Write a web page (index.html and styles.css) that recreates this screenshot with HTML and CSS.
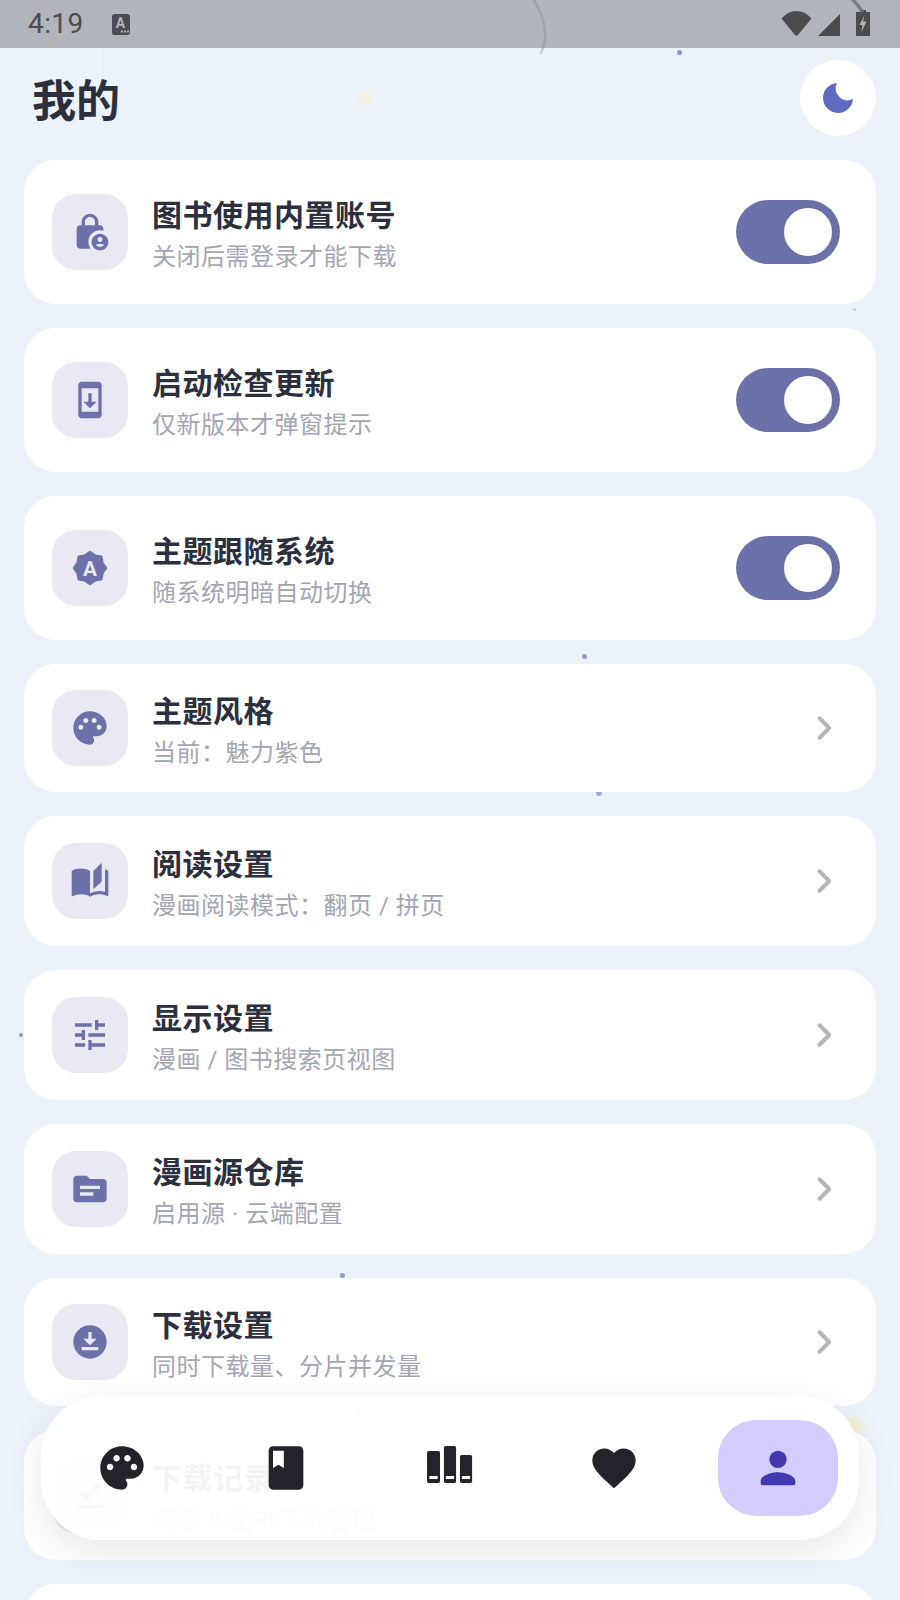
FILE: index.html
```html
<!DOCTYPE html>
<html lang="zh-CN">
<head>
    <meta charset="UTF-8">
    <meta name="viewport" content="width=device-width, initial-scale=1.0">
    <title>我的</title>
    <link rel="stylesheet" href="styles.css">
</head>
<body>

    <!-- Floating particles behind the page -->
    <div class="particles">
        <span class="dot dot-1"></span>
        <span class="dot dot-2"></span>
        <span class="dot dot-3"></span>
        <span class="dot dot-4"></span>
        <span class="dot dot-5"></span>
        <span class="dot dot-6"></span>
        <span class="dot dot-7"></span>
        <span class="glow glow-1"></span>
        <span class="glow glow-2"></span>
    </div>

    <div class="status-bar">
        <div class="status-left">
            <span class="status-time">4:19</span>
            <svg class="status-a" viewBox="0 0 18 21">
                <rect width="18" height="21" rx="2.500" fill="#4a4c50"/>
                <text x="8.500" y="13.500" class="status-a-text">A</text>
                <rect x="9" y="16.500" width="2" height="2" fill="#b1b4bb"/>
                <rect x="12" y="16.500" width="2" height="2" fill="#b1b4bb"/>
                <rect x="15" y="16.500" width="2" height="2" fill="#b1b4bb"/>
            </svg>
        </div>
        <div class="status-right">
            <svg class="status-wifi" viewBox="0 0 31 25">
                <path d="M.5 7.500C4.500 3 9.500 0 15.500 0s11 3 15 7.500L17 24c-.8.9-2.200.9-3 0z" fill="#4a4c50"/>
            </svg>
            <svg class="status-signal" viewBox="0 0 22 22">
                <path d="M22 0v22H0z" fill="#4a4c50"/>
            </svg>
            <svg class="status-battery" viewBox="0 0 14 26">
                <path d="M4 0h6v2h4v24H0V2h4z" fill="#4a4c50"/>
                <path d="M8.500 5 3.500 15h3l-1 7 5-10.500H7z" fill="#b1b4bb"/>
            </svg>
        </div>
    </div>

    <svg class="arcs" viewBox="0 0 900 80">
        <path d="M534 0Q552 30 541 53" class="arc-line"/>
        <path d="M853 0Q858 5 862 11" class="arc-line arc-dark"/>
        <path d="M103 0V75" class="arc-line arc-faint"/>
    </svg>

    <div class="page">
        <div class="header">
            <h1 class="page-title">我的</h1>
            <div class="theme-btn">
                <svg viewBox="0 0 30 30"><path d="M14 0A15 15 0 1 0 30 16A12 12 0 0 1 14 0z" fill="#5e6bc0"/></svg>
            </div>
        </div>

        <div class="list">
            <div class="row row-switch">
                <div class="row-icon">
                    <svg viewBox="0 0 24 24"><path d="M18 8h-1V6c0-2.760-2.240-5-5-5S7 3.240 7 6v2H6c-1.100 0-2 .9-2 2v10c0 1.100.9 2 2 2h6.260A6.990 6.990 0 0 1 11 18c0-3.870 3.130-7 7-7 .7 0 1.370.1 2 .29V10c0-1.100-.9-2-2-2zM15 8H9V6c0-1.660 1.340-3 3-3s3 1.340 3 3v2z"/><path d="M18 13c-2.760 0-5 2.240-5 5s2.240 5 5 5 5-2.240 5-5-2.240-5-5-5zm0 2c.83 0 1.500.67 1.500 1.500S18.830 18 18 18s-1.500-.67-1.500-1.500.67-1.500 1.500-1.500zm0 6c-1.030 0-1.940-.52-2.480-1.320.73-.42 1.570-.68 2.480-.68s1.750.26 2.480.68c-.54.8-1.450 1.320-2.480 1.320z"/></svg>
                </div>
                <div class="row-text">
                    <div class="row-title">图书使用内置账号</div>
                    <div class="row-sub">关闭后需登录才能下载</div>
                </div>
                <div class="switch"><span class="knob"></span></div>
            </div>

            <div class="row row-switch">
                <div class="row-icon">
                    <svg viewBox="0 0 24 24"><path d="M17 1.010 7 1c-1.100 0-2 .9-2 2v18c0 1.100.9 2 2 2h10c1.100 0 2-.9 2-2V3c0-1.100-.9-1.990-2-1.990zM17 19H7V5h10v14zm-1-6h-3V8h-2v5H8l4 4 4-4z"/></svg>
                </div>
                <div class="row-text">
                    <div class="row-title">启动检查更新</div>
                    <div class="row-sub">仅新版本才弹窗提示</div>
                </div>
                <div class="switch"><span class="knob"></span></div>
            </div>

            <div class="row row-switch">
                <div class="row-icon">
                    <svg viewBox="0 0 24 24">
                        <path class="badge" d="M12 2.400 15.100 4.520 18.790 5.210 19.480 8.900 21.600 12 19.480 15.100 18.790 18.790 15.100 19.480 12 21.600 8.900 19.480 5.210 18.790 4.520 15.100 2.400 12 4.520 8.900 5.210 5.210 8.900 4.520z"/>
                        <text x="12" y="16.500" class="badge-text">A</text>
                    </svg>
                </div>
                <div class="row-text">
                    <div class="row-title">主题跟随系统</div>
                    <div class="row-sub">随系统明暗自动切换</div>
                </div>
                <div class="switch"><span class="knob"></span></div>
            </div>

            <div class="row row-link">
                <div class="row-icon">
                    <svg viewBox="0 0 24 24"><path d="M12 2C6.490 2 2 6.490 2 12s4.490 10 10 10c1.380 0 2.500-1.120 2.500-2.500 0-.61-.23-1.200-.64-1.670-.08-.1-.13-.21-.13-.33 0-.28.22-.5.5-.5H16c3.310 0 6-2.690 6-6 0-4.960-4.490-9-10-9zm5.500 11c-.83 0-1.500-.67-1.500-1.500s.67-1.500 1.500-1.500 1.500.67 1.500 1.500-.67 1.500-1.500 1.500zm-3-4c-.83 0-1.500-.67-1.500-1.500S13.670 6 14.500 6s1.500.67 1.500 1.500S15.330 9 14.500 9zM5 11.500c0-.83.67-1.500 1.500-1.500s1.500.67 1.500 1.500S7.330 13 6.500 13 5 12.330 5 11.500zm6-4c0 .83-.67 1.500-1.500 1.500S8 8.330 8 7.500 8.670 6 9.500 6s1.500.67 1.500 1.500z"/></svg>
                </div>
                <div class="row-text">
                    <div class="row-title">主题风格</div>
                    <div class="row-sub">当前：魅力紫色</div>
                </div>
                <svg class="chevron" viewBox="0 0 24 24"><path d="M9 5.500 15.500 12 9 18.500"/></svg>
            </div>

            <div class="row row-link row-mixed">
                <div class="row-icon">
                    <svg viewBox="0 0 24 24"><path d="M19 1l-5 5v11l5-4.500V1zM1 6v14.650c0 .25.25.5.5.5.1 0 .15-.05.25-.05C3.100 20.450 5.050 20 6.500 20c1.950 0 4.050.4 5.500 1.500V6c-1.450-1.100-3.550-1.500-5.500-1.500S2.450 4.900 1 6zm22 13.500V6c-.6-.45-1.250-.8-2-1.050v13.500c-1.100-.35-2.300-.5-3.500-.5-1.700 0-4.150.65-5.500 1.500v2c1.350-.85 3.800-1.500 5.500-1.500 1.650 0 3.350.3 4.750 1.050.1.05.15.05.25.05.25 0 .5-.25.5-.5v-1.100z"/></svg>
                </div>
                <div class="row-text">
                    <div class="row-title">阅读设置</div>
                    <div class="row-sub">漫画阅读模式：翻页 / 拼页</div>
                </div>
                <svg class="chevron" viewBox="0 0 24 24"><path d="M9 5.500 15.500 12 9 18.500"/></svg>
            </div>

            <div class="row row-link row-mixed">
                <div class="row-icon">
                    <svg viewBox="0 0 24 24"><path d="M3 17v2h6v-2H3zM3 5v2h10V5H3zm10 16v-2h8v-2h-8v-2h-2v6h2zM7 9v2H3v2h4v2h2V9H7zm14 4v-2H11v2h10zm-6-4h2V7h4V5h-4V3h-2v6z"/></svg>
                </div>
                <div class="row-text">
                    <div class="row-title">显示设置</div>
                    <div class="row-sub">漫画 / 图书搜索页视图</div>
                </div>
                <svg class="chevron" viewBox="0 0 24 24"><path d="M9 5.500 15.500 12 9 18.500"/></svg>
            </div>

            <div class="row row-link row-mixed">
                <div class="row-icon">
                    <svg viewBox="0 0 24 24"><path d="M20 6h-8l-2-2H4c-1.100 0-1.990.9-1.990 2L2 18c0 1.100.9 2 2 2h16c1.100 0 2-.9 2-2V8c0-1.100-.9-2-2-2zm-6 10H6v-2h8v2zm4-4H6v-2h12v2z"/></svg>
                </div>
                <div class="row-text">
                    <div class="row-title">漫画源仓库</div>
                    <div class="row-sub">启用源 · 云端配置</div>
                </div>
                <svg class="chevron" viewBox="0 0 24 24"><path d="M9 5.500 15.500 12 9 18.500"/></svg>
            </div>

            <div class="row row-link">
                <div class="row-icon">
                    <svg viewBox="0 0 24 24"><path d="M12 2C6.490 2 2 6.490 2 12s4.490 10 10 10 10-4.490 10-10S17.510 2 12 2zm-1 8V6h2v4h3l-4 4-4-4h3zm6 7H7v-2h10v2z"/></svg>
                </div>
                <div class="row-text">
                    <div class="row-title">下载设置</div>
                    <div class="row-sub">同时下载量、分片并发量</div>
                </div>
                <svg class="chevron" viewBox="0 0 24 24"><path d="M9 5.500 15.500 12 9 18.500"/></svg>
            </div>

            <div class="row row-link row-mixed">
                <div class="row-icon">
                    <svg viewBox="0 0 24 24"><path d="M5 18h14v2H5v-2zm4.600-2.700L5 10.700l2-1.900 2.600 2.600L17 4l2 2-9.400 9.300z"/></svg>
                </div>
                <div class="row-text">
                    <div class="row-title">下载记录</div>
                    <div class="row-sub">漫画 &amp; 图书下载管理</div>
                </div>
                <svg class="chevron" viewBox="0 0 24 24"><path d="M9 5.500 15.500 12 9 18.500"/></svg>
            </div>

            <div class="row row-link"></div>
        </div>
    </div>

    <!-- Bottom navigation -->
    <div class="bottom-nav">
        <div class="nav-item">
            <svg viewBox="0 0 24 24"><path d="M12 2C6.490 2 2 6.490 2 12s4.490 10 10 10c1.380 0 2.500-1.120 2.500-2.500 0-.61-.23-1.200-.64-1.670-.08-.1-.13-.21-.13-.33 0-.28.22-.5.5-.5H16c3.310 0 6-2.690 6-6 0-4.960-4.490-9-10-9zm5.500 11c-.83 0-1.500-.67-1.500-1.500s.67-1.500 1.500-1.500 1.500.67 1.500 1.500-.67 1.500-1.500 1.500zm-3-4c-.83 0-1.500-.67-1.500-1.500S13.670 6 14.500 6s1.500.67 1.500 1.500S15.330 9 14.500 9zM5 11.500c0-.83.67-1.500 1.500-1.500s1.500.67 1.500 1.500S7.330 13 6.500 13 5 12.330 5 11.500zm6-4c0 .83-.67 1.500-1.500 1.500S8 8.330 8 7.500 8.670 6 9.500 6s1.500.67 1.500 1.500z"/></svg>
        </div>
        <div class="nav-item">
            <svg viewBox="0 0 24 24"><path d="M18 2H6c-1.100 0-2 .9-2 2v16c0 1.100.9 2 2 2h12c1.100 0 2-.9 2-2V4c0-1.100-.9-2-2-2zM6 4h5v8l-2.500-1.500L6 12V4z"/></svg>
        </div>
        <div class="nav-item">
            <svg viewBox="0 0 24 24">
                <rect x="1.400" y="4.150" width="6" height="14.750" rx=".8"/>
                <rect x="9.200" y="1.850" width="5.600" height="17.050" rx=".8"/>
                <rect x="16.600" y="6" width="5.600" height="12.900" rx=".8"/>
                <rect x="2.500" y="15.700" width="3.800" height="1.400" class="book-label"/>
                <rect x="10.100" y="15.700" width="3.800" height="1.400" class="book-label"/>
                <rect x="17.500" y="15.700" width="3.800" height="1.400" class="book-label"/>
            </svg>
        </div>
        <div class="nav-item">
            <svg viewBox="0 0 24 24"><path d="M12 21.350l-1.450-1.320C5.400 15.360 2 12.280 2 8.500 2 5.420 4.420 3 7.500 3c1.740 0 3.410.81 4.500 2.090C13.090 3.810 14.760 3 16.500 3 19.580 3 22 5.420 22 8.500c0 3.780-3.400 6.860-8.550 11.540L12 21.350z"/></svg>
        </div>
        <div class="nav-item nav-item-active">
            <svg viewBox="0 0 24 24"><circle cx="12" cy="8" r="4"/><path d="M4 18c0-2.660 5.330-4 8-4s8 1.340 8 4v1c0 .55-.45 1-1 1H5c-.55 0-1-.45-1-1z"/></svg>
        </div>
    </div>

</body>
</html>
```

FILE: styles.css
```css
/* General page */
html, body {
    margin: 0;
    padding: 0;
    height: 100%;
    background: #ebf2fa;
    overflow: hidden;
    font-family: "Roboto", "Noto Sans CJK SC", sans-serif;
}

body {
    position: relative;
}

/* Particles on the background */
.particles {
    position: absolute;
    inset: 0;
}

.dot {
    position: absolute;
    width: 5px;
    height: 5px;
    border-radius: 50%;
    background: #8f9bc9;
}

.dot-1 { left: 677px; top: 50px; }
.dot-2 { left: 853px; top: 308px; width: 3px; height: 3px; background: #c8cfe6; }
.dot-3 { left: 582px; top: 654px; }
.dot-4 { left: 596px; top: 790px; width: 6px; height: 6px; background: #a3acc9; }
.dot-5 { left: 19px; top: 1033px; width: 4px; height: 4px; }
.dot-6 { left: 340px; top: 1273px; }
.dot-7 { left: 355px; top: 1409px; }

.glow {
    position: absolute;
    width: 22px;
    height: 22px;
    border-radius: 50%;
    background: radial-gradient(circle, #f5efd8 0 25%, rgba(245, 239, 216, 0.25) 45%, rgba(245, 239, 216, 0) 70%);
}

.glow-1 { left: 355px; top: 87px; }
.glow-2 { left: 838px; top: 1410px; width: 32px; height: 32px; }

/* Status bar */
.status-bar {
    position: absolute;
    top: 0;
    left: 0;
    right: 0;
    height: 48px;
    display: flex;
    justify-content: space-between;
    align-items: center;
    padding: 0 30px 0 28px;
    box-sizing: border-box;
    background: #b1b4bb;
}

.status-left {
    display: flex;
    align-items: center;
    gap: 28px;
}

.status-time {
    font-family: "Roboto", sans-serif;
    font-size: 28px;
    letter-spacing: 0.4px;
    color: #4a4c50;
    line-height: 48px;
}

.status-a {
    width: 18px;
    height: 21px;
}

.status-a-text {
    font-family: "Roboto", sans-serif;
    font-size: 14px;
    font-weight: 700;
    fill: #b1b4bb;
    text-anchor: middle;
}

.status-right {
    display: flex;
    align-items: flex-end;
    gap: 6px;
    margin-bottom: 2px;
}

.status-wifi { width: 31px; height: 25px; }
.status-signal { width: 22px; height: 22px; }
.status-battery { width: 14px; height: 26px; margin-left: 10px; }

.arcs {
    position: absolute;
    top: 0;
    left: 0;
    width: 900px;
    height: 80px;
    fill: none;
}

.arc-line {
    stroke: rgba(120, 125, 145, 0.3);
    stroke-width: 2.500;
    stroke-linecap: round;
}

.arc-dark {
    stroke: rgba(110, 113, 125, 0.8);
    stroke-width: 3.500;
}

.arc-faint {
    stroke: rgba(120, 125, 145, 0.03);
    stroke-width: 2;
}

/* Page content */
.page {
    position: relative;
    height: 1600px;
    padding: 60px 24px 0;
    box-sizing: border-box;
    overflow: hidden;
}

.header {
    display: flex;
    justify-content: space-between;
    align-items: center;
    height: 76px;
    margin-bottom: 24px;
}

.page-title {
    margin: 8px 0 0 8px;
    font-size: 44px;
    font-weight: 700;
    line-height: 76px;
    color: #2c2f3e;
}

.theme-btn {
    width: 76px;
    height: 76px;
    border-radius: 50%;
    background: #fff;
    display: flex;
    justify-content: center;
    align-items: center;
}

.theme-btn svg {
    width: 30px;
    height: 30px;
}

.list {
    display: flex;
    flex-direction: column;
    gap: 24px;
}

/* Setting rows */
.row {
    display: flex;
    align-items: center;
    padding: 0 28px;
    background: #fff;
    border-radius: 32px;
    box-sizing: border-box;
}

.row-switch { height: 144px; }
.row-link { height: 128px; }
.row-mixed { height: 130px; }

.row-icon {
    width: 76px;
    height: 76px;
    flex-shrink: 0;
    margin-right: 24px;
    border-radius: 24px;
    background: #e9e9f3;
    display: flex;
    justify-content: center;
    align-items: center;
}

.row-icon svg {
    width: 40px;
    height: 40px;
    fill: #6d71a9;
}

.row-icon .badge {
    stroke: #6d71a9;
    stroke-width: 1.400;
    stroke-linejoin: round;
}

.row-icon .badge-text {
    font-family: "Roboto", sans-serif;
    font-size: 12.500px;
    font-weight: 700;
    fill: #e9e9f3;
    text-anchor: middle;
}

.row-text {
    flex: 1;
    padding-top: 5px;
}

.row-title {
    font-size: 30px;
    font-weight: 700;
    line-height: 40px;
    letter-spacing: 0.5px;
    color: #2c2f3e;
}

.row-sub {
    margin-top: 4px;
    font-size: 24px;
    line-height: 34px;
    letter-spacing: 0.5px;
    color: #a2a6b3;
}

/* Toggle */
.switch {
    width: 104px;
    height: 64px;
    margin-right: 8px;
    padding: 8px;
    box-sizing: border-box;
    border-radius: 32px;
    background: #6d71a9;
    display: flex;
    justify-content: flex-end;
}

.knob {
    width: 48px;
    height: 48px;
    border-radius: 50%;
    background: #fff;
}

.chevron {
    width: 36px;
    height: 36px;
    margin-right: 6px;
    fill: none;
    stroke: #b4b5b9;
    stroke-width: 2.600;
    stroke-linecap: round;
    stroke-linejoin: round;
}

/* Bottom navigation */
.bottom-nav {
    position: absolute;
    left: 41px;
    top: 1396px;
    width: 818px;
    height: 144px;
    padding: 0 21px;
    box-sizing: border-box;
    display: flex;
    justify-content: space-between;
    align-items: center;
    background: rgba(255, 255, 255, 0.95);
    border-radius: 60px;
    box-shadow: 0 12px 36px rgba(40, 40, 60, 0.1);
}

.nav-item {
    width: 120px;
    height: 96px;
    border-radius: 38px;
    display: flex;
    justify-content: center;
    align-items: center;
}

.nav-item svg {
    width: 52px;
    height: 52px;
    fill: #22232b;
}

.nav-item .book-label {
    fill: #fff;
}

.nav-item-active {
    background: #d2cdfd;
}

.nav-item-active svg {
    fill: #4339ae;
}
```
